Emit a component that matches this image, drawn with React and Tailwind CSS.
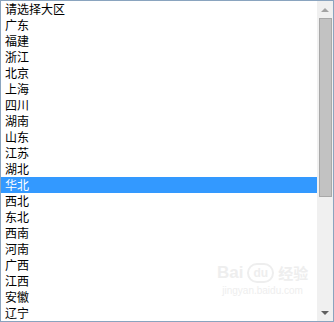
const items = [
  '请选择大区', '广东', '福建', '浙江', '北京', '上海', '四川', '湖南', '山东', '江苏',
  '湖北', '华北', '西北', '东北', '西南', '河南', '广西', '江西', '安徽', '辽宁',
]

export default function App() {
  return (
    <div className="relative flex h-[322px] w-[334px] border border-[#8aa4bf] bg-white font-['Noto_Sans_CJK_SC',sans-serif] text-[12px] text-black">
      <div className="flex-1 overflow-hidden">
        {items.map((item) => (
          <div
            key={item}
            className={
              item === '华北'
                ? 'h-4 bg-[#3399ff] pl-1 leading-4 text-white'
                : 'h-4 pl-1 leading-4'
            }
          >
            {item}
          </div>
        ))}
      </div>

      <div className="flex w-[16px] flex-col bg-[#f0f0f0]">
        <div className="flex h-[17px] items-center justify-center">
          <div className="h-0 w-0 border-x-[4px] border-b-[4px] border-x-transparent border-b-[#a3a3a3]" />
        </div>
        <div className="mx-auto h-[179px] w-[13px] border border-[#a8a8a8] bg-[#c2c2c2]" />
        <div className="flex-1" />
        <div className="flex h-[17px] items-center justify-center">
          <div className="h-0 w-0 border-x-[4px] border-t-[4px] border-x-transparent border-t-[#606060]" />
        </div>
      </div>

      <div className="pointer-events-none absolute left-[216px] top-[262px] flex flex-col items-center text-[#eeeeee]">
        <div className="flex items-center gap-1 font-['Liberation_Sans',sans-serif] text-[17px] font-bold leading-5">
          <span>Bai</span>
          <span className="rounded-full border-2 border-[#eeeeee] px-1 text-[12px] leading-4">du</span>
          <span className="font-['Noto_Sans_CJK_SC',sans-serif] text-[15px]">经验</span>
        </div>
        <div className="font-['Liberation_Sans',sans-serif] text-[10px] leading-4">jingyan.baidu.com</div>
      </div>
    </div>
  )
}
